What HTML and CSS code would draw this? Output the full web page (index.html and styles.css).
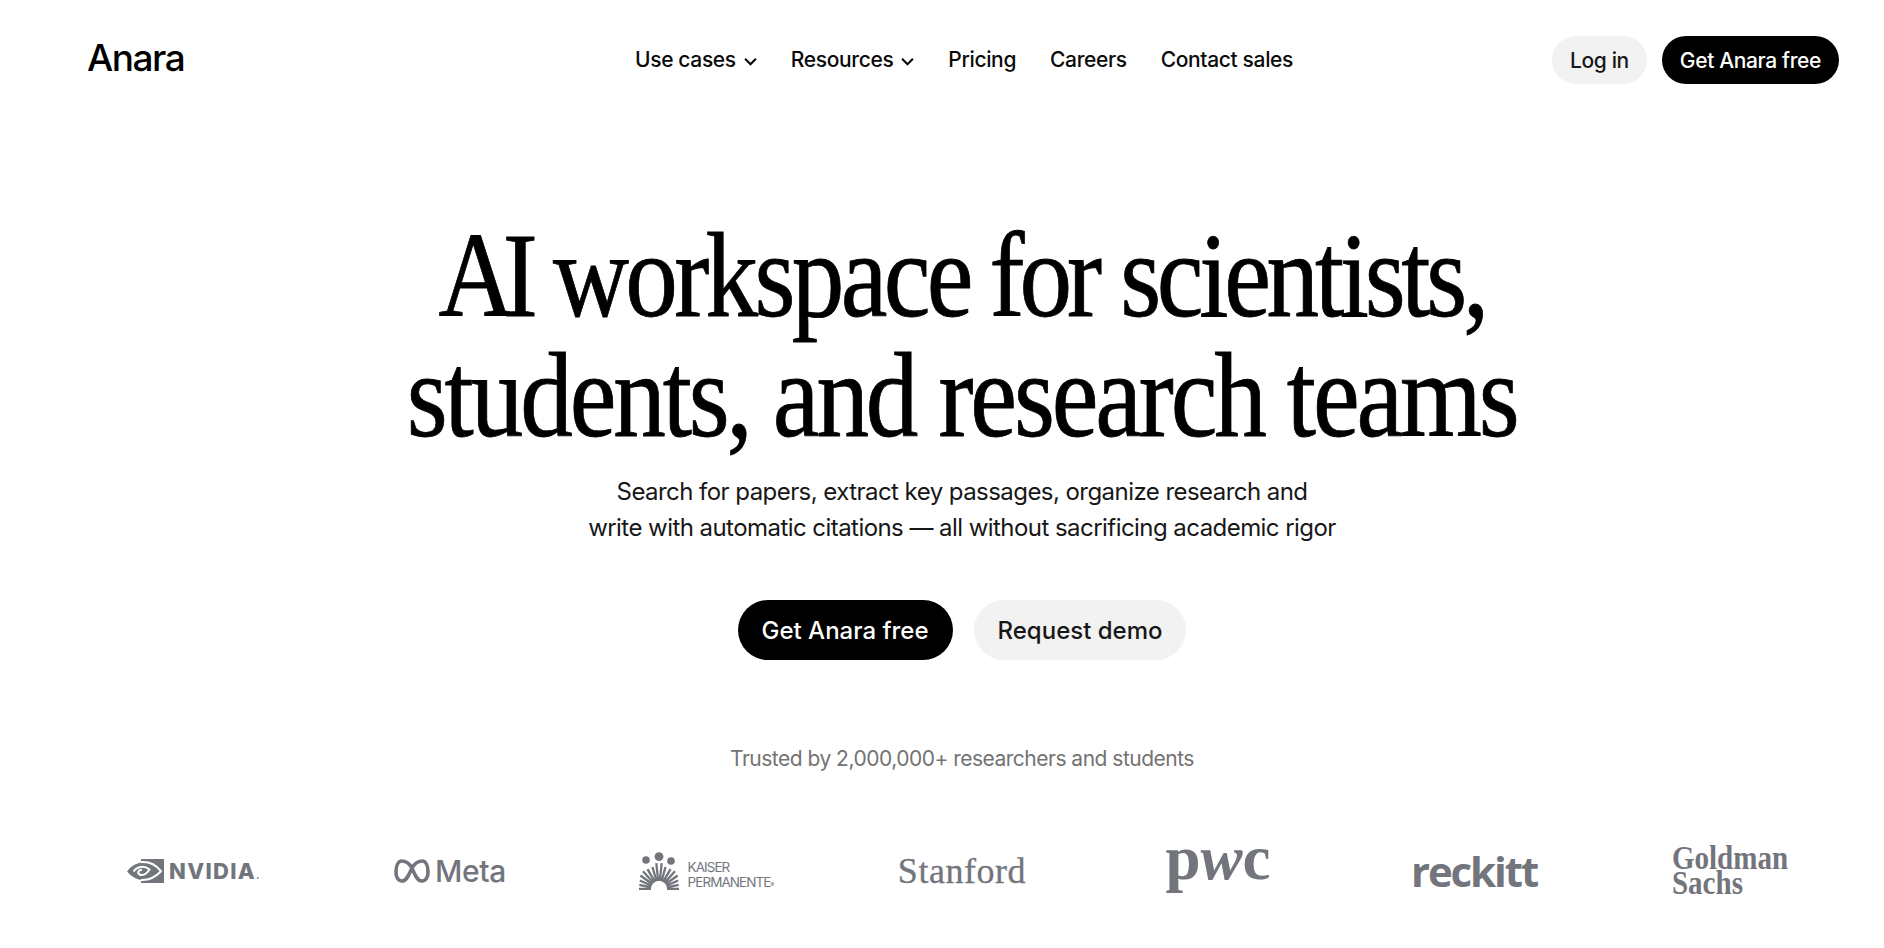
FILE: index.html
```html
<!DOCTYPE html>
<html lang="en">
<head>
<meta charset="utf-8">
<title>Anara</title>
<link rel="stylesheet" href="styles.css">
</head>
<body>
<div class="page">
  <header class="header">
    <a class="brand">Anara</a>
    <nav class="nav">
      <a class="nav-link">Use cases <svg class="chev" viewBox="0 0 12 8"><path d="M1 1.5l5 5 5-5"/></svg></a>
      <a class="nav-link">Resources <svg class="chev" viewBox="0 0 12 8"><path d="M1 1.5l5 5 5-5"/></svg></a>
      <a class="nav-link">Pricing</a>
      <a class="nav-link">Careers</a>
      <a class="nav-link">Contact sales</a>
    </nav>
    <div class="actions">
      <a class="btn btn-light btn-sm">Log in</a>
      <a class="btn btn-dark btn-sm">Get Anara free</a>
    </div>
  </header>
  <main class="hero">
    <h1 class="title"><span class="t-ai">AI</span> <span class="t-w">workspace</span> <span class="t-f">for</span> <span class="t-s">scientists,</span><br>students, and research teams</h1>
    <p class="sub">Search for papers, extract key passages, organize research and<br>write with automatic citations — all without sacrificing academic rigor</p>
    <div class="cta">
      <a class="btn btn-dark btn-lg">Get Anara free</a>
      <a class="btn btn-light btn-lg">Request demo</a>
    </div>
    <p class="trust">Trusted by 2,000,000+ researchers and students</p>
  </main>
  <section class="logos">
    <div class="logo">
      <svg class="nv-icon" viewBox="0 0 37 24"><rect class="fill" x="14" y="0" width="23" height="24"/><path class="fill" d="M0 12.5C5 6 11 3.5 16 3.5V21C10 21 5 18 0 12.5z"/><path class="cut" d="M14 3.2C23 2.4 29 6 34 12.2 28 18.5 22 21.5 14 21"/><path class="cut" d="M6.5 12.5C10 7.5 17 6 22.5 10.5 20 14.5 16 17 12.5 15.5 10 14 11.5 10.5 15 11"/></svg>
      <span class="nv-text">NVIDIA<small>.</small></span>
    </div>
    <div class="logo">
      <svg class="meta-icon" viewBox="0 0 36 24"><path class="line-m" d="M18 9C15 4 12 2 8 2 4 2 2 7 2 13c0 5 2 9 6 9 5 0 7-7 10-13 3-5 6-7 10-7 4 0 6 5 6 11 0 5-2 9-6 9-5 0-8-8-10-13z"/></svg>
      <span class="meta-text">Meta</span>
    </div>
    <div class="logo">
      <svg class="kp-icon" viewBox="0 0 40 38"><circle class="fill" cx="7" cy="8" r="3.8"/><circle class="fill" cx="20" cy="4.6" r="4.4"/><circle class="fill" cx="32" cy="9" r="3.8"/><path class="ray" d="M28 37H40M27.8 35.3L39.6 32.8M27.3 33.7L39.2 28.5M26.5 32.3L38.6 23.5M25.4 31.1L36 19.2M24 30.1L31.5 17.1M22.5 29.4L26.5 15M20.8 29L22.7 11.1M19.2 29L17.3 11.1M17.5 29.4L13.5 15M16 30.1L8.5 17.1M14.6 31.1L4 19.2M13.5 32.3L1.4 23.5M12.7 33.7L.8 28.5M12.2 35.3L.4 32.8M12 37H0"/></svg>
      <span class="kp-text">KAISER<br>PERMANENTE<small>®</small></span>
    </div>
    <div class="logo"><span class="stanford">Stanford</span></div>
    <div class="logo"><span class="pwc">p<i>w</i>c</span></div>
    <div class="logo"><span class="reckitt">reckitt</span></div>
    <div class="logo"><div class="gs"><span class="gs-line">Goldman</span><span class="gs-line">Sachs</span></div></div>
  </section>
</div>
</body>
</html>
```
FILE: styles.css
```css
* { box-sizing: border-box; }
html, body { margin: 0; height: 100%; background: #fff; overflow: hidden; }
body { font-family: Inter, "Liberation Sans", sans-serif; color: #0a0a0a; }
.page { padding-left: 40px; }
.header { position: relative; display: flex; align-items: center; justify-content: space-between; height: 120px; padding: 0 45px 0 47px; }
.brand { font-size: 37px; font-weight: 500; letter-spacing: -0.04em; color: #000; margin-top: -6px; }
.nav { position: absolute; left: 50%; top: 35px; height: 48px; margin-left: 2px; transform: translateX(-50%); display: flex; align-items: center; gap: 34px; white-space: nowrap; }
.nav-link { display: flex; align-items: center; gap: 8px; font-size: 21px; font-weight: 500; letter-spacing: -0.017em; }
.chev { width: 13px; height: 9px; margin-top: 4px; fill: none; stroke: #0a0a0a; stroke-width: 2; }
.actions { display: flex; gap: 15px; }
.btn { display: flex; align-items: center; justify-content: center; border-radius: 999px; font-weight: 500; white-space: nowrap; }
.btn-dark { background: #000; color: #fff; }
.btn-light { background: #f2f2f2; color: #171717; }
.btn-sm { height: 48px; padding: 0 18px; font-size: 21px; letter-spacing: -0.017em; }
.btn-lg { height: 60px; padding: 0 24px; font-size: 24px; }
.hero { display: flex; flex-direction: column; align-items: center; text-align: center; padding-top: 96px; }
.title { margin: 0; font-family: "Liberation Serif", serif; font-weight: 400; font-size: 120px; line-height: 120px; letter-spacing: -0.03em; color: #000; white-space: nowrap; transform: scaleX(0.877); -webkit-text-stroke: 0.8px #000; }
.t-ai { letter-spacing: -0.11em; margin-right: 4px; }
.t-w { letter-spacing: -0.035em; margin-right: -4px; }
.t-f { letter-spacing: -0.048em; }
.t-s { letter-spacing: -0.041em; }
.sub { margin: 18px 0 0; font-size: 24px; line-height: 36px; color: #171717; letter-spacing: -0.023em; white-space: nowrap; }
.cta { display: flex; gap: 21px; margin-top: 54px; }
.trust { margin: 85px 0 0; font-size: 21px; line-height: 28px; color: #737373; letter-spacing: -0.024em; }
.logos { display: grid; grid-template-columns: repeat(7, 256px); justify-content: center; align-items: center; height: 70px; margin-top: 63px; color: #73757d; }
.logo { display: flex; align-items: center; justify-content: center; gap: 5px; }
.fill { fill: #73757d; }
.cut { fill: none; stroke: #fff; stroke-width: 2; }
.nv-icon { width: 37px; height: 24px; flex: none; }
.nv-text { font-family: Inter, sans-serif; font-size: 22px; font-weight: 800; letter-spacing: 1.3px; }
.nv-text small { font-size: 10px; }
.meta-icon { width: 36px; height: 24px; }
.line-m { fill: none; stroke: #73757d; stroke-width: 3.6; }
.meta-text { font-family: Inter, sans-serif; font-size: 30px; font-weight: 500; letter-spacing: -0.01em; }
.kp-icon { width: 40px; height: 38px; margin-right: 4px; }
.ray { fill: none; stroke: #73757d; stroke-width: 2.3; }
.kp-text { font-size: 13.5px; line-height: 15px; text-align: left; letter-spacing: -0.07em; margin-top: 9px; }
.kp-text small { font-size: 6px; }
.stanford { font-family: "Liberation Serif", serif; font-size: 36px; letter-spacing: 0.015em; -webkit-text-stroke: 0.3px #73757d; }
.pwc { font-family: "Liberation Serif", serif; font-size: 63px; font-weight: 700; line-height: 1; margin-top: -25px; }
.reckitt { font-family: "Open Sans", sans-serif; font-size: 42px; font-weight: 700; letter-spacing: -0.05em; line-height: 1; }
.gs { font-family: "Liberation Serif", serif; font-size: 33px; text-align: left; transform: scaleX(0.88); font-weight: 700; }
.gs-line { display: block; height: 25px; line-height: 25px; }
```
